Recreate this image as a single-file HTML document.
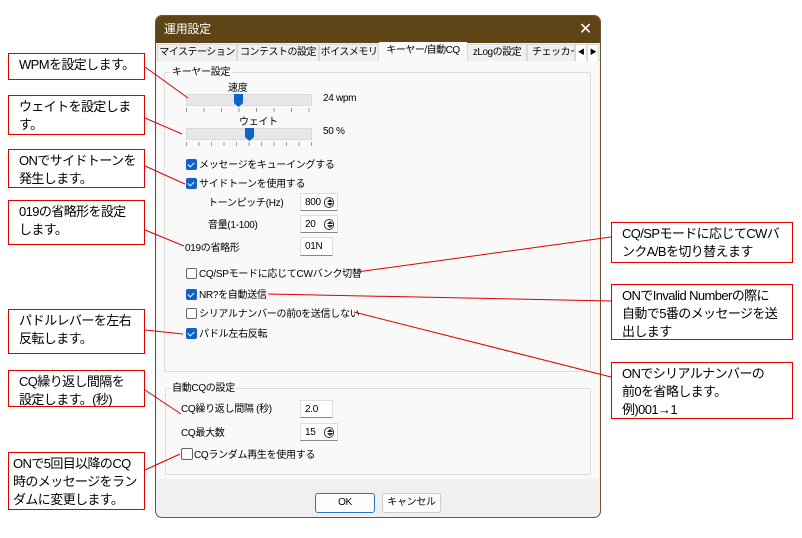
<!DOCTYPE html>
<html><head><meta charset="utf-8"><style>
*{margin:0;padding:0;box-sizing:border-box}
body{width:802px;height:538px;background:#fff;position:relative;overflow:hidden;font-family:"Liberation Sans","Noto Sans CJK JP",sans-serif;font-size:10px;color:#000}
.a{position:absolute;white-space:nowrap}
.dlg .a{margin-top:-2px}
.note{position:absolute;border:1px solid #e00000;background:#fff;font-size:13px;letter-spacing:-0.6px;line-height:18px;padding:2px 0 0 10px;white-space:nowrap;overflow:hidden}
.dlg{position:absolute;left:155px;top:15px;width:446px;height:503px;background:#f0f0f0;border:1px solid #6b5432;border-radius:7px;overflow:hidden;letter-spacing:-0.3px}
.title{position:absolute;left:0;top:0;width:100%;height:27px;background:#5e4417;color:#fff;font-size:12px;line-height:27px;padding-left:8px}
.tabs{position:absolute;left:0;top:27px;width:100%;height:18px;background:#f0f0f0;border-bottom:1px solid #d8d8d8}
.tab{position:absolute;top:1px;height:17px;border:1px solid #d9d9d9;border-bottom:none;background:#f0f0f0;font-size:10px;line-height:15px;text-align:center;overflow:hidden;white-space:nowrap;letter-spacing:-0.5px}
.grp{position:absolute;border:1px solid #dcdcdc;background:#f9f9f9;border-radius:2px}
.cb{position:absolute;width:11px;height:11px;border-radius:2px}
.on{background:#1062c8}
.on::after{content:"";position:absolute;left:3px;top:2px;width:3px;height:5px;border:solid #fff;border-width:0 1px 1px 0;transform:rotate(45deg)}
.off{border:1px solid #666;background:#fff}
.ed{position:absolute;background:#fff;border:1px solid #ddd;border-bottom:1px solid #888;font-size:10px;line-height:16px;padding:1px 0 0 4px}
.sp{position:absolute;right:3px;top:3px;width:10px;height:11px;border-radius:5px;border:1px solid #333;background:#fff}
.sp::before{content:"";position:absolute;left:2px;top:1px;border:3px solid transparent;border-bottom:3px solid #222;border-top:0}
.sp::after{content:"";position:absolute;left:2px;top:5px;border:3px solid transparent;border-top:3px solid #222;border-bottom:0}
.trk{position:absolute;left:30px;width:126px;height:12px;background:#e5e7e8;border:1px solid #dadada}
.th{position:absolute;width:9px;height:13px;background:#0d64c9;clip-path:polygon(0 0,100% 0,100% 70%,50% 100%,0 70%)}
.btn{position:absolute;height:20px;background:#fdfdfd;border:1px solid #ccc;border-radius:3px;text-align:center;line-height:18px;font-size:10px}
</style></head><body>

<div class="note" style="left:8px;top:53px;width:137px;height:27px">WPMを設定します。</div>
<div class="note" style="left:8px;top:95px;width:137px;height:40px">ウェイトを設定しま<br>す。</div>
<div class="note" style="left:8px;top:149px;width:137px;height:39px">ONでサイドトーンを<br>発生します。</div>
<div class="note" style="left:8px;top:200px;width:137px;height:45px">019の省略形を設定<br>します。</div>
<div class="note" style="left:8px;top:309px;width:137px;height:45px">パドルレバーを左右<br>反転します。</div>
<div class="note" style="left:8px;top:370px;width:137px;height:37px">CQ繰り返し間隔を<br>設定します。(秒)</div>
<div class="note" style="left:8px;top:452px;width:137px;height:58px;padding-left:4px">ONで5回目以降のCQ<br>時のメッセージをラン<br>ダムに変更します。</div>
<div class="note" style="left:611px;top:222px;width:182px;height:41px">CQ/SPモードに応じてCWバ<br>ンクA/Bを切り替えます</div>
<div class="note" style="left:611px;top:284px;width:182px;height:56px">ONでInvalid Numberの際に<br>自動で5番のメッセージを送<br>出します</div>
<div class="note" style="left:611px;top:362px;width:182px;height:57px">ONでシリアルナンバーの<br>前0を省略します。<br>例)001→1</div>

<div class="dlg">
<div class="title">運用設定<span style="position:absolute;right:8px;top:0;font-size:16px">✕</span></div>
<div class="tabs">
<div class="tab" style="left:1px;width:80px">マイステーション</div>
<div class="tab" style="left:81px;width:82px">コンテストの設定</div>
<div class="tab" style="left:163px;width:60px">ボイスメモリ</div>
<div class="tab" style="left:223px;width:88px;top:-1px;height:20px;background:#f9f9f9;border-color:#f9f9f9">キーヤー/自動CQ</div>
<div class="tab" style="left:311px;width:60px">zLogの設定</div>
<div class="tab" style="left:371px;width:48px;text-align:left;padding-left:4px">チェッカー</div>
<div class="tab" style="left:419px;width:12px;background:#fff;font-size:7px">◀</div>
<div class="tab" style="left:431px;width:12px;background:#fff;font-size:7px">▶</div>
</div>
<div style="position:absolute;left:1px;top:45px;width:442px;height:418px;background:#f9f9f9"></div>
<div class="grp" style="left:8px;top:56px;width:427px;height:300px"></div>
<div class="a" style="left:14px;top:49px;background:#f9f9f9;padding:0 2px">キーヤー設定</div>
<div class="a" style="left:72px;top:65px">速度</div>
<div class="trk" style="top:78px"></div><div class="th" style="left:78px;top:78px"></div>
<div class="a" style="left:167px;top:79px">24 wpm</div>
<div class="a" style="left:30px;top:94px;width:126px;height:4px;background:repeating-linear-gradient(90deg,#999 0 1px,transparent 1px 17.5px)"></div>
<div class="a" style="left:83px;top:99px">ウェイト</div>
<div class="trk" style="top:112px"></div><div class="th" style="left:89px;top:112px"></div>
<div class="a" style="left:167px;top:112px">50 %</div>
<div class="a" style="left:30px;top:128px;width:126px;height:4px;background:repeating-linear-gradient(90deg,#999 0 1px,transparent 1px 12.5px)"></div>
<div class="cb on" style="left:30px;top:143px"></div><div class="a" style="left:43px;top:142px">メッセージをキューイングする</div>
<div class="cb on" style="left:30px;top:162px"></div><div class="a" style="left:43px;top:161px">サイドトーンを使用する</div>
<div class="a" style="left:52px;top:180px">トーンピッチ(Hz)</div>
<div class="ed" style="left:144px;top:177px;width:38px;height:18px">800<div class="sp"></div></div>
<div class="a" style="left:52px;top:202px">音量(1-100)</div>
<div class="ed" style="left:144px;top:199px;width:38px;height:18px">20<div class="sp"></div></div>
<div class="a" style="left:29px;top:225px">019の省略形</div>
<div class="ed" style="left:144px;top:221px;width:33px;height:19px">01N</div>
<div class="cb off" style="left:30px;top:252px"></div><div class="a" style="left:43px;top:251px">CQ/SPモードに応じてCWバンク切替</div>
<div class="cb on" style="left:30px;top:273px"></div><div class="a" style="left:43px;top:272px">NR?を自動送信</div>
<div class="cb off" style="left:30px;top:292px"></div><div class="a" style="left:43px;top:291px">シリアルナンバーの前0を送信しない</div>
<div class="cb on" style="left:30px;top:312px"></div><div class="a" style="left:43px;top:311px">パドル左右反転</div>

<div class="grp" style="left:9px;top:372px;width:426px;height:87px"></div>
<div class="a" style="left:15px;top:365px;background:#f9f9f9;padding:0 1px">自動CQの設定</div>
<div class="a" style="left:25px;top:386px">CQ繰り返し間隔 (秒)</div>
<div class="ed" style="left:144px;top:384px;width:33px;height:18px">2.0</div>
<div class="a" style="left:25px;top:410px">CQ最大数</div>
<div class="ed" style="left:144px;top:407px;width:38px;height:18px">15<div class="sp"></div></div>
<div class="cb off" style="left:25px;top:432px;width:12px;height:12px"></div><div class="a" style="left:38px;top:432px">CQランダム再生を使用する</div>

<div class="btn" style="left:159px;top:477px;width:60px;border:1px solid #2a73c8">OK</div>
<div class="btn" style="left:226px;top:477px;width:59px">キャンセル</div>
</div>

<svg class="a" style="left:0;top:0;z-index:5" width="802" height="538">
<g stroke="#e00000" stroke-width="1" fill="none">
<line x1="145" y1="67" x2="188" y2="98"/>
<line x1="145" y1="118" x2="182" y2="134"/>
<line x1="145" y1="166" x2="185" y2="184"/>
<line x1="145" y1="230" x2="184" y2="246"/>
<line x1="145" y1="330" x2="183" y2="334"/>
<line x1="145" y1="390" x2="181" y2="414"/>
<line x1="145" y1="470" x2="180" y2="454"/>
<line x1="611" y1="237" x2="357" y2="272"/>
<line x1="611" y1="301" x2="268" y2="294"/>
<line x1="611" y1="377" x2="354" y2="312"/>
</g></svg>
</body></html>
